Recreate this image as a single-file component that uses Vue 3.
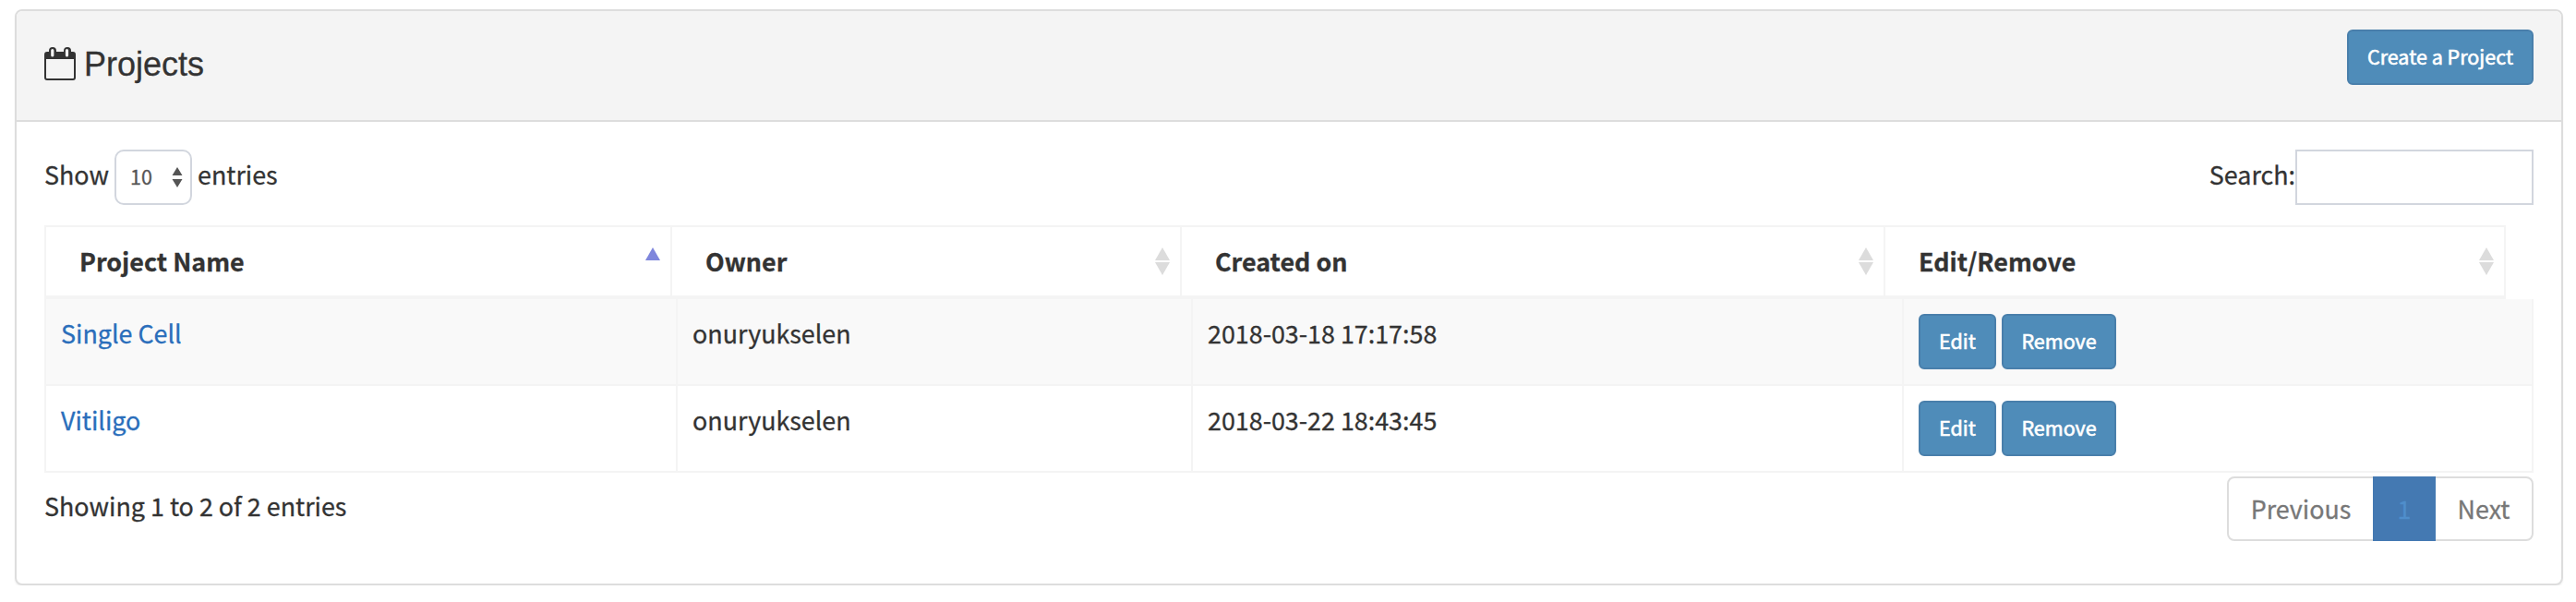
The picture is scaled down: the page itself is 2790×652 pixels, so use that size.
<script setup>
const columns = [
  { label: 'Project Name', sorted: true },
  { label: 'Owner' },
  { label: 'Created on' },
  { label: 'Edit/Remove' },
]
const rows = [
  { name: 'Single Cell', owner: 'onuryukselen', created: '2018-03-18 17:17:58' },
  { name: 'Vitiligo', owner: 'onuryukselen', created: '2018-03-22 18:43:45' },
]
</script>

<template>
  <section class="panel">
    <header class="panel-head">
      <h1 class="title">
        <svg class="calendar" width="34" height="36" viewBox="0 0 34 36">
          <path fill="#333" fill-rule="evenodd" d="M3 5H5V4a4 4 0 0 1 8 0V5H21V4a4 4 0 0 1 8 0V5H31a3 3 0 0 1 3 3V33a3 3 0 0 1-3 3H3a3 3 0 0 1-3-3V8a3 3 0 0 1 3-3ZM2 13V33a1 1 0 0 0 1 1H31a1 1 0 0 0 1-1V13ZM7.2 3.5V9a1.6 1.6 0 0 0 3.2 0V3.5a1.6 1.6 0 0 0-3.2 0ZM22.9 3.5V9a1.6 1.6 0 0 0 3.2 0V3.5a1.6 1.6 0 0 0-3.2 0Z" />
        </svg>
        <span class="title-text">Projects</span>
      </h1>
      <button class="btn create">Create a Project</button>
    </header>

    <div class="panel-body">
      <div class="controls">
        <div class="length">
          <span class="label">Show</span>
          <div class="select">
            <span>10</span>
            <svg width="12" height="22" viewBox="0 0 12 22">
              <path d="M6 0L11.5 9H.5ZM.5 13H11.5L6 22Z" fill="#555" />
            </svg>
          </div>
          <span class="label">entries</span>
        </div>
        <label class="search"><span class="label">Search:</span><input class="search-input" type="text" /></label>
      </div>

      <div class="thead">
        <div v-for="c in columns" :key="c.label" class="th">
          <span>{{ c.label }}</span>
          <svg class="sort" width="16" height="30" viewBox="0 0 16 30">
            <path d="M8 0L16 14H0Z" :fill="c.sorted ? '#7f86dc' : '#dcdcdc'" />
            <path v-if="!c.sorted" d="M0 16H16L8 30Z" fill="#dcdcdc" />
          </svg>
        </div>
      </div>
      <div class="tbody">
        <div v-for="r in rows" :key="r.name" class="tr">
          <div class="td"><a class="link">{{ r.name }}</a></div>
          <div class="td">{{ r.owner }}</div>
          <div class="td">{{ r.created }}</div>
          <div class="td actions">
            <button class="btn edit">Edit</button>
            <button class="btn remove">Remove</button>
          </div>
        </div>
      </div>

      <footer class="foot">
        <span class="info">Showing 1 to 2 of 2 entries</span>
        <nav class="pager">
          <span class="page prev">Previous</span>
          <span class="page active">1</span>
          <span class="page next">Next</span>
        </nav>
      </footer>
    </div>
  </section>
</template>

<style>
body {
  background: #fff;
}
</style>

<style scoped>
* {
  box-sizing: border-box;
}
.panel {
  width: 2760px;
  height: 624px;
  margin: 10px 0 0 16px;
  border: 2px solid #ddd;
  border-radius: 8px;
  background: #fff;
  box-shadow: 0 2px 2px rgba(0, 0, 0, 0.05);
  font-family: "Noto Sans CJK SC", "Noto Sans", sans-serif;
  font-size: 26.86px;
  line-height: 42px;
  color: #333;
  overflow: hidden;
  white-space: nowrap;
  -webkit-text-stroke: 0.3px currentColor;
}
.panel-head {
  display: flex;
  justify-content: space-between;
  height: 120px;
  padding: 20px 30px 0;
  background: #f4f4f4;
  border-bottom: 2px solid #ddd;
}
.title {
  display: flex;
  align-items: flex-start;
  gap: 9px;
  margin: 0;
  padding-top: 19px;
  font: 400 36px/40px "Liberation Sans", Arial, sans-serif;
}
.title-text {
  margin-top: -1px;
}
.btn {
  height: 60px;
  padding: 0 0 3px;
  border: 2px solid #497fab;
  border-radius: 6px;
  background: #4f8cb9;
  color: #fff;
  font-family: inherit;
  font-size: 21.5px;
  line-height: 30px;
  -webkit-text-stroke: 0.6px #fff;
}
.create {
  width: 202px;
}
.edit {
  width: 84px;
}
.remove {
  width: 124px;
}
.panel-body {
  padding: 30px 30px 0;
}
.controls {
  display: flex;
  justify-content: space-between;
  height: 82px;
}
.length,
.search {
  display: flex;
  height: 60px;
}
.label {
  padding-top: 6px;
}
.length {
  gap: 6px;
}
.select {
  display: flex;
  align-items: center;
  justify-content: space-between;
  width: 84px;
  height: 60px;
  padding: 0 8px 0 15px;
  border: 2px solid #d2d6de;
  border-radius: 10px;
  font-size: 21.5px;
  color: #555;
}
.select span {
  margin-top: -3px;
}
.search-input {
  width: 258px;
  height: 60px;
  padding: 0 12px;
  border: 2px solid #d2d6de;
  background: #fff;
}
.thead {
  display: grid;
  grid-template-columns: 678px 552px 762px 672px;
  width: 2666px;
  height: 80px;
  border: 2px solid #f4f4f4;
  border-right: 0;
  border-bottom-width: 4px;
}
.th {
  display: flex;
  align-items: center;
  justify-content: space-between;
  padding: 0 11px 0 36px;
  border-right: 2px solid #f4f4f4;
  font-weight: 700;
}
.tbody {
  border-left: 2px solid #f4f4f4;
}
.tr {
  display: grid;
  grid-template-columns: 684px 558px 770px 682px;
  height: 94px;
  border-bottom: 2px solid #f4f4f4;
}
.tr:first-child {
  background: #f9f9f9;
}
.td {
  padding: 16px 16px 0;
  border-right: 2px solid #f4f4f4;
}
.actions {
  display: flex;
  gap: 6px;
}
.link {
  color: #2a6ebb;
}
.foot {
  display: flex;
  justify-content: space-between;
  padding-top: 4px;
}
.info {
  padding-top: 11px;
}
.pager {
  display: flex;
  height: 70px;
  border: 2px solid #ddd;
  border-radius: 8px;
}
.page {
  display: flex;
  align-items: center;
  justify-content: center;
  color: #777;
}
.prev {
  width: 156px;
}
.active {
  width: 68px;
  height: 70px;
  margin-top: -2px;
  background: #4479b2;
  color: #4f8ecb;
}
.next {
  width: 104px;
}
</style>
